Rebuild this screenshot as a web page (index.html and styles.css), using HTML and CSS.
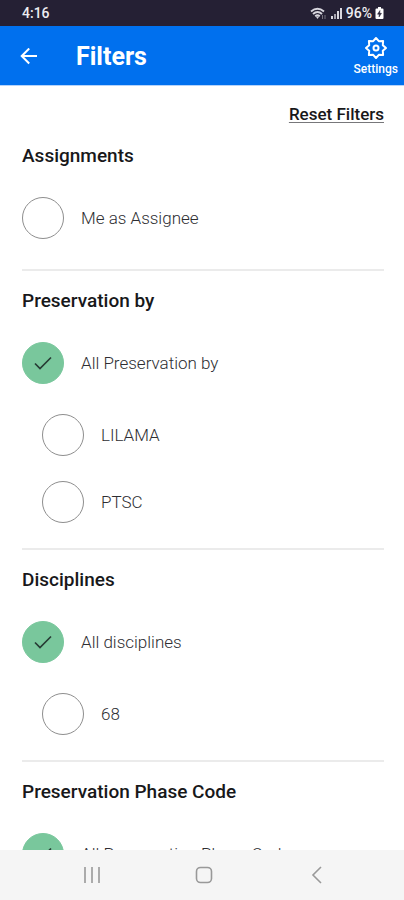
FILE: index.html
```
<!DOCTYPE html>
<html lang="en">
<head>
<meta charset="utf-8">
<meta name="viewport" content="width=device-width, initial-scale=1">
<title>Filters</title>
<link rel="stylesheet" href="styles.css">
</head>
<body>
<div class="app">
  <div class="status">
    <span class="status-time">4:16</span>
    <div class="status-right">
      <svg class="status-wifi" viewBox="0 0 17 13" width="17" height="13" aria-hidden="true">
        <path d="M1 4.5Q7.500 -1 14 4.500M3 7Q7.500 3 12 7M5.200 9.300Q7.500 7.400 9.800 9.300" fill="none" stroke="#d8d6de" stroke-width="1.900"/>
        <path d="M5.800 9.500L7.500 12L9.200 9.500Z" fill="#d8d6de"/>
        <path d="M12.500 8v4M15 8v4" stroke="#77737f" stroke-width="1"/>
      </svg>
      <svg viewBox="0 0 13 12" width="13" height="12" aria-hidden="true">
        <path d="M1 9h2v3H1zM7 4h2v8H7zM10 1h2v11h-2z" fill="#d8d6de"/>
        <path d="M4 7h2v5H4z" fill="#a5a2ad"/>
      </svg>
      <span class="status-battery">96%</span>
      <svg viewBox="0 0 9 12" width="9" height="12" aria-hidden="true">
        <path d="M3 0h3v1.500h1.500Q8.500 1.500 8.500 2.500v8.500q0 1-1 1h-6q-1 0-1-1V2.500q0-1 1-1H3z" fill="#fff"/>
        <path d="M5 3.500L2.500 7.200h1.800L4 10l2.500-3.700H4.700z" fill="#252034" stroke="#252034" stroke-width=".5"/>
      </svg>
    </div>
  </div>

  <header class="bar">
    <button class="back" type="button" aria-label="Back">
      <svg viewBox="0 0 18 18" width="18" height="18" aria-hidden="true">
        <path d="M17 8H2M9.200 .5L1.700 8l7.500 7.500" fill="none" stroke="#fff" stroke-width="2"/>
      </svg>
    </button>
    <h1 class="title">Filters</h1>
    <button class="settings" type="button">
      <svg viewBox="-12 -12 24 24" width="24" height="24" aria-hidden="true">
        <path d="M0 -10L2.800 -6.800L7.100 -7.100L6.800 -2.800L10 0L6.800 2.800L7.100 7.100L2.800 6.800L0 10L-2.800 6.800L-7.100 7.100L-6.800 2.800L-10 0L-6.800 -2.800L-7.100 -7.100L-2.800 -6.800Z" fill="none" stroke="#fff" stroke-width="2" stroke-linejoin="round"/>
        <circle r="2.500" fill="none" stroke="#fff" stroke-width="2"/>
      </svg>
      <span>Settings</span>
    </button>
  </header>

  <main class="content">
    <div class="reset-row"><a class="reset" href="#">Reset Filters</a></div>

    <section class="group">
      <h2 class="heading">Assignments</h2>
      <label class="option"><span class="tick"><input type="checkbox"><svg viewBox="0 0 20 20" aria-hidden="true"><path d="M2 10.500l5 5L18 4.500"/></svg></span>Me as Assignee</label>
    </section>

    <section class="group">
      <h2 class="heading">Preservation by</h2>
      <label class="option"><span class="tick"><input type="checkbox" checked><svg viewBox="0 0 20 20" aria-hidden="true"><path d="M2 10.500l5 5L18 4.500"/></svg></span>All Preservation by</label>
      <label class="option option-child"><span class="tick"><input type="checkbox"><svg viewBox="0 0 20 20" aria-hidden="true"><path d="M2 10.500l5 5L18 4.500"/></svg></span>LILAMA</label>
      <label class="option option-child"><span class="tick"><input type="checkbox"><svg viewBox="0 0 20 20" aria-hidden="true"><path d="M2 10.500l5 5L18 4.500"/></svg></span>PTSC</label>
    </section>

    <section class="group">
      <h2 class="heading">Disciplines</h2>
      <label class="option"><span class="tick"><input type="checkbox" checked><svg viewBox="0 0 20 20" aria-hidden="true"><path d="M2 10.500l5 5L18 4.500"/></svg></span>All disciplines</label>
      <label class="option option-child"><span class="tick"><input type="checkbox"><svg viewBox="0 0 20 20" aria-hidden="true"><path d="M2 10.500l5 5L18 4.500"/></svg></span>68</label>
    </section>

    <section class="group">
      <h2 class="heading">Preservation Phase Code</h2>
      <label class="option"><span class="tick"><input type="checkbox" checked><svg viewBox="0 0 20 20" aria-hidden="true"><path d="M2 10.500l5 5L18 4.500"/></svg></span>All Preservation Phase Code</label>
    </section>
  </main>

  <nav class="system" aria-label="System">
    <button type="button" aria-label="Recent apps"><svg viewBox="0 0 18 18" width="18" height="18" aria-hidden="true"><path d="M2 1v16M9 1v16M16 1v16"/></svg></button>
    <button type="button" aria-label="Home"><svg viewBox="0 0 18 18" width="18" height="18" aria-hidden="true"><rect x="1.500" y="1.500" width="15" height="15" rx="4"/></svg></button>
    <button type="button" aria-label="Go back"><svg viewBox="0 0 18 18" width="18" height="18" aria-hidden="true"><path d="M14 1L6 9l8 8"/></svg></button>
  </nav>
</div>
</body>
</html>
```
FILE: styles.css
```
* {
  box-sizing: border-box;
}

body {
  margin: 0;
  background: #fff;
  color: #18181a;
  font-family: Roboto, "Liberation Sans", sans-serif;
}

button {
  padding: 0;
  border: 0;
  background: none;
  color: inherit;
  font: inherit;
}

svg {
  display: block;
  flex: none;
}

.app {
  display: flex;
  flex-direction: column;
  height: 100vh;
}

.status {
  display: flex;
  flex: none;
  align-items: center;
  justify-content: space-between;
  height: 26px;
  padding: 0 20px 0 22px;
  background: #252034;
  color: #eeedf1;
  font-size: 14px;
  font-weight: 500;
}

.status-right {
  display: flex;
  align-items: center;
  gap: 3px;
}

.bar {
  display: flex;
  flex: none;
  align-items: center;
  height: 60px;
  padding: 3px 6px 0 20px;
  border-bottom: 1px solid #b5d3fa;
  background: #0070ee;
  color: #fff;
}

.title {
  flex: 1;
  margin: 0 0 0 38px;
  font-size: 25px;
  font-weight: 700;
  line-height: 32px;
}

.settings {
  display: flex;
  flex-direction: column;
  align-items: center;
  font-size: 12px;
  font-weight: 500;
  line-height: 18px;
}

.content {
  flex: 1;
  min-height: 0;
  overflow-y: auto;
  padding: 18px 20px 0 22px;
  scrollbar-width: none;
}

.reset-row {
  display: flex;
  justify-content: flex-end;
  margin-bottom: 2px;
}

.reset {
  color: inherit;
  font-size: 17px;
  font-weight: 500;
  line-height: 20px;
  text-decoration: underline 1px #77777a;
  text-decoration-skip-ink: none;
  text-underline-offset: 2px;
}

.group {
  padding-top: 17px;
  border-bottom: 2px solid #ebebeb;
}

.heading {
  margin: 0 0 28px;
  font-size: 19px;
  font-weight: 500;
  line-height: 26px;
}

.option {
  display: flex;
  align-items: center;
  gap: 17px;
  margin-bottom: 30px;
  color: #2e2e32;
  font-size: 17px;
  font-weight: 300;
  line-height: 20px;
}

.option-child {
  margin-bottom: 25px;
  margin-left: 20px;
}

.tick {
  display: grid;
  flex: none;
  place-items: center;
}

.tick input,
.tick svg {
  grid-area: 1 / 1;
}

.tick input {
  width: 42px;
  height: 42px;
  margin: 0;
  border: 1px solid #8e8e8e;
  border-radius: 50%;
  appearance: none;
}

.tick input:checked {
  border-color: #79c79c;
  background: #79c79c;
}

.tick svg {
  width: 20px;
  height: 20px;
  fill: none;
  pointer-events: none;
  stroke: #273c35;
  stroke-width: 1.7;
  visibility: hidden;
}

.tick input:checked + svg {
  visibility: visible;
}

.system {
  display: flex;
  flex: none;
  align-items: center;
  justify-content: center;
  height: 50px;
  padding-left: 4px;
  background: #f5f5f5;
}

.system button {
  display: flex;
  justify-content: center;
  width: 28%;
}

.system svg {
  fill: none;
  stroke: #999;
  stroke-width: 1.6;
}
```
